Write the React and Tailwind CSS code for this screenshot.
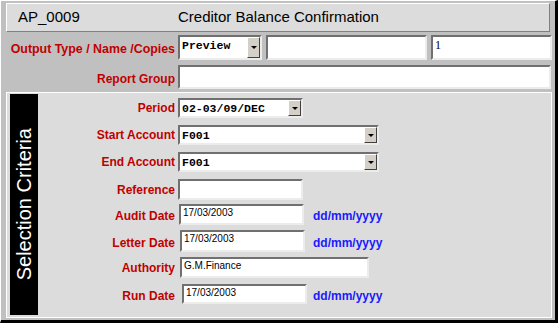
import React from 'react';

// sunken white field, win95-ish
const Field = ({ className = '', children }) => (
  <div className={`h-full bg-white border-2 border-t-[#707070] border-l-[#707070] border-r-[#ececec] border-b-[#ececec] flex overflow-hidden ${className}`}>
    {children}
  </div>
);

const DropBtn = () => (
  <div className="ml-auto w-[13px] h-full shrink-0 bg-[#d4d0c8] border border-t-white border-l-white border-r-[#404040] border-b-[#404040] flex items-center justify-center">
    <div className="w-0 h-0 border-l-[3px] border-r-[3px] border-t-[3px] border-l-transparent border-r-transparent border-t-black" />
  </div>
);

const Label = ({ children, className = '', big = false }) => (
  <div className={`shrink-0 text-right font-bold text-[#c00000] leading-none ${big ? 'text-[12.4px]' : 'text-[12px]'} ${className}`}>{children}</div>
);

const Mono = ({ children }) => (
  <span className="pl-[2px] pt-[3px] text-[11.5px] leading-none font-bold font-['Liberation_Mono','Courier_New',monospace] text-black">{children}</span>
);

const Small = ({ children }) => (
  <span className="pl-[2px] pt-[2px] text-[10px] leading-none font-['Liberation_Sans',Arial,sans-serif] text-black">{children}</span>
);

const Fmt = ({ className = '' }) => (
  <span className={`text-[12px] font-bold text-[#1a1aff] leading-none ${className}`}>dd/mm/yyyy</span>
);

export default function App() {
  return (
    <div className="w-[558px] h-[323px] bg-[#c0c0c0] border-t border-l border-white border-r-[3px] border-b-[3px] border-r-black border-b-black flex flex-col overflow-hidden font-['Liberation_Sans',Arial,sans-serif]">
      {/* title bar */}
      <div className="mx-[5px] mt-[2px] h-[29px] shrink-0 bg-[#dcdcdc] border border-t-white border-l-white border-r-[#808080] border-b-[#808080] flex items-center text-[15px] text-black">
        <span className="pl-[11px] w-[171px]">AP_0009</span>
        <span>Creditor Balance Confirmation</span>
      </div>

      {/* output options */}
      <div className="mt-[3px] h-[25px] flex items-center">
        <Label big className="w-[174px] pt-[3px]">Output Type / Name /Copies</Label>
        <div className="ml-[3px] h-full flex">
          <Field className="w-[84px]">
            <Mono>Preview</Mono>
            <DropBtn />
          </Field>
          <Field className="ml-[4px] w-[161px]" />
          <Field className="ml-[4px] w-[121px]">
            <span className="pl-[2px] pt-[2px] text-[12px] leading-none font-['Liberation_Serif','Times_New_Roman',serif]">1</span>
          </Field>
        </div>
      </div>
      <div className="mt-[5px] h-[24px] flex items-center">
        <Label className="w-[174px] pt-[3px]">Report Group</Label>
        <div className="ml-[3px] h-full">
          <Field className="w-[373px]" />
        </div>
      </div>

      {/* selection criteria */}
      <div className="mt-[3px] ml-[5px] w-[546px] h-[226px] shrink-0 bg-[#dcdcdc] border border-white flex">
        <div className="ml-[3px] mt-[1px] mb-[2px] w-[28px] bg-black flex items-center justify-center">
          <span className="[writing-mode:vertical-rl] rotate-180 text-white text-[20px] leading-none whitespace-nowrap">Selection Criteria</span>
        </div>
        <div className="flex flex-col">
          <div className="mt-[5px] h-[20px] flex items-center">
            <Label className="w-[137px]">Period</Label>
            <div className="ml-[3px] h-full">
              <Field className="w-[125px]">
                <Mono>02-03/09/DEC</Mono>
                <DropBtn />
              </Field>
            </div>
          </div>
          <div className="mt-[7px] h-[20px] flex items-center">
            <Label className="w-[137px]">Start Account</Label>
            <div className="ml-[3px] h-full">
              <Field className="w-[201px]">
                <Mono>F001</Mono>
                <DropBtn />
              </Field>
            </div>
          </div>
          <div className="mt-[7px] h-[20px] flex items-center">
            <Label className="w-[137px]">End Account</Label>
            <div className="ml-[3px] h-full">
              <Field className="w-[201px]">
                <Mono>F001</Mono>
                <DropBtn />
              </Field>
            </div>
          </div>
          <div className="mt-[7px] h-[21px] flex items-center">
            <Label className="w-[137px]">Reference</Label>
            <div className="ml-[3px] h-full">
              <Field className="w-[125px]" />
            </div>
          </div>
          <div className="mt-[4px] h-[21px] flex items-center">
            <Label className="w-[137px] pt-[3px]">Audit Date</Label>
            <div className="ml-[4px] h-full">
              <Field className="w-[125px]"><Small>17/03/2003</Small></Field>
            </div>
            <Fmt className="ml-[9px] pt-[3px]" />
          </div>
          <div className="mt-[5px] h-[22px] flex items-center">
            <Label className="w-[137px] pt-[3px]">Letter Date</Label>
            <div className="ml-[5px] h-full">
              <Field className="w-[125px]"><Small>17/03/2003</Small></Field>
            </div>
            <Fmt className="ml-[8px] pt-[3px]" />
          </div>
          <div className="mt-[5px] h-[21px] flex items-center">
            <Label className="w-[137px]">Authority</Label>
            <div className="ml-[5px] h-full">
              <Field className="w-[189px]"><Small>G.M.Finance</Small></Field>
            </div>
          </div>
          <div className="mt-[6px] h-[20px] flex items-center">
            <Label className="w-[137px] pt-[3px]">Run Date</Label>
            <div className="ml-[7px] h-full">
              <Field className="w-[125px]"><Small>17/03/2003</Small></Field>
            </div>
            <Fmt className="ml-[6px] pt-[3px]" />
          </div>
        </div>
      </div>
    </div>
  );
}
